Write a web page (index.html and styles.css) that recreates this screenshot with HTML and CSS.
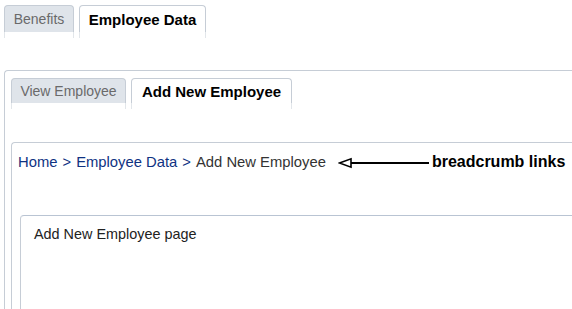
FILE: index.html
```html
<!DOCTYPE html>
<html>
<head>
<meta charset="utf-8">
<link rel="stylesheet" href="styles.css">
</head>
<body>
<div class="page">
  <div class="tabbar top-tabs">
    <div class="tab">
      <div class="tab-label off t-benefits">Benefits</div>
      <div class="tab-tail"></div>
    </div>
    <div class="tab">
      <div class="tab-label on t-empdata">Employee Data</div>
      <div class="tab-tail"></div>
    </div>
  </div>
  <div class="panel outer">
    <div class="tabbar sub-tabs">
      <div class="tab">
        <div class="tab-label off t-view">View Employee</div>
        <div class="tab-tail"></div>
      </div>
      <div class="tab">
        <div class="tab-label on t-add">Add New Employee</div>
        <div class="tab-tail"></div>
      </div>
    </div>
    <div class="panel inner">
      <div class="crumbs">
        <a class="crumb">Home</a><span class="sep">&gt;</span><a class="crumb">Employee Data</a><span class="sep">&gt;</span><span class="current">Add New Employee</span>
        <svg class="arrow" width="92" height="12" viewBox="0 0 92 12">
          <path d="M1.5 6 L13 1.8 L13 10.2 Z" fill="#fff" stroke="#000" stroke-width="1.6" stroke-linejoin="miter"/>
          <line x1="13" y1="6" x2="91" y2="6" stroke="#000" stroke-width="2"/>
        </svg>
        <span class="note">breadcrumb links</span>
      </div>
      <div class="panel content">
        <div class="content-text">Add New Employee page</div>
      </div>
    </div>
  </div>
</div>
</body>
</html>
```

FILE: styles.css
```css
html, body {
  margin: 0;
  padding: 0;
  background: #fff;
}
body {
  width: 572px;
  height: 309px;
  overflow: hidden;
  font-family: "Liberation Sans", Arial, sans-serif;
}
.page {
  display: flex;
  flex-direction: column;
  height: 309px;
}
.tabbar {
  display: flex;
  gap: 5px;
  align-items: flex-start;
}
.top-tabs {
  padding: 5px 0 0 4px;
  height: 33px;
}
.tab {
  display: flex;
  flex-direction: column;
}
.tab-label {
  box-sizing: border-box;
  border: 1px solid #c6cdd6;
  border-bottom: none;
  border-radius: 4px 4px 0 0;
  display: flex;
  align-items: center;
  justify-content: center;
  font-size: 14px;
  white-space: nowrap;
}
.tab-label.off {
  background: #dfe4ea;
  color: #6a6a6a;
}
.tab-label.on {
  background: #fff;
  color: #000;
  font-weight: bold;
  font-size: 15px;
}
.tab-tail {
  height: 6px;
  border-left: 1px solid #e2e6ea;
  border-right: 1px solid #e2e6ea;
}
.t-benefits { width: 70px; height: 27px; }
.t-empdata { width: 127px; height: 27px; }
.t-view { width: 115px; height: 25px; }
.t-add { width: 161px; height: 25px; }

.panel {
  border-top: 1px solid #c6cdd6;
  border-left: 1px solid #c6cdd6;
  border-top-left-radius: 4px;
  flex: 1;
  display: flex;
  flex-direction: column;
}
.outer {
  margin: 32px 0 0 4px;
  padding: 7px 0 0 6px;
}
.sub-tabs {
  height: 33px;
}
.inner {
  margin-top: 31px;
  padding: 0 0 0 8px;
}
.crumbs {
  display: flex;
  align-items: center;
  height: 34px;
  padding-top: 2px;
  margin-left: -2px;
  font-size: 14.8px;
  white-space: nowrap;
}
.crumb {
  color: #0f3282;
}
.sep {
  color: #0f3282;
  margin: 0 5px;
}
.current {
  color: #333;
}
.arrow {
  margin-left: 12px;
  margin-top: 1px;
  flex: none;
}
.note {
  margin-left: 2px;
  font-weight: bold;
  font-size: 16px;
  color: #000;
}
.content {
  margin-top: 36px;
  border-top-color: #b9c4d3;
  padding: 10px 0 0 13px;
}
.content-text {
  font-size: 14.4px;
  color: #222;
}
```
